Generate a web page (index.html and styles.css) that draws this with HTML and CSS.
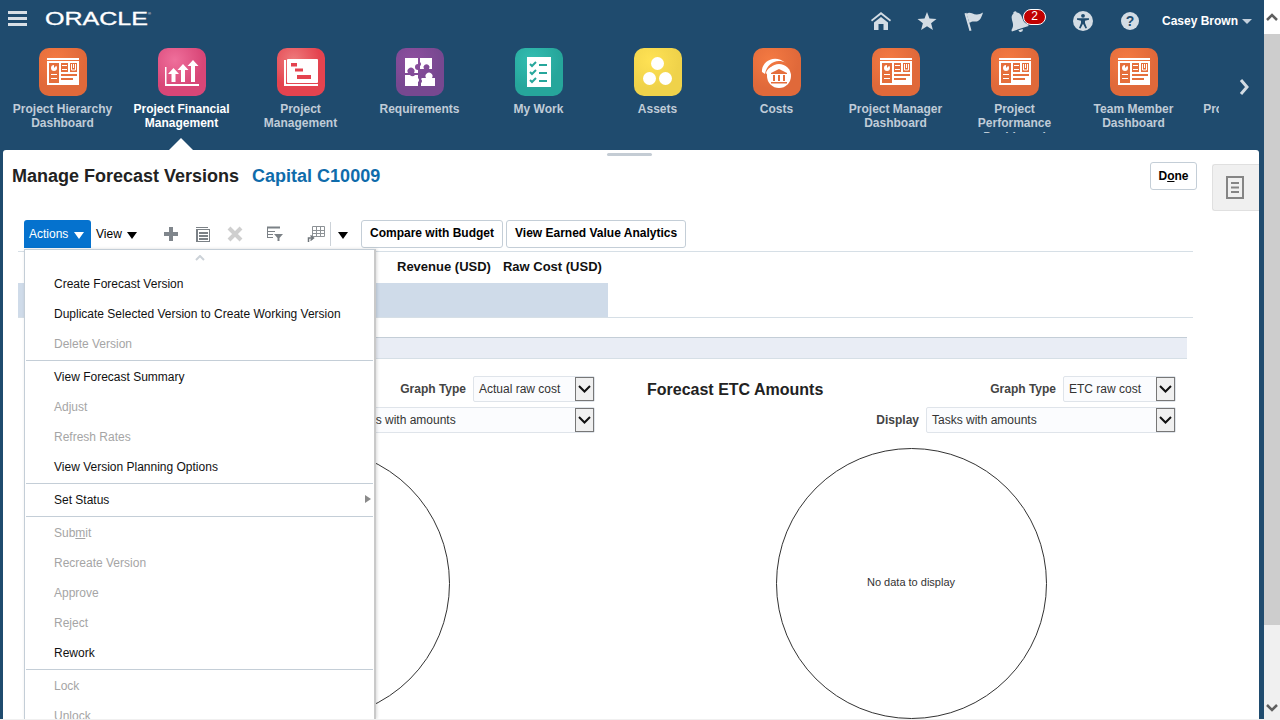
FILE: index.html
```html
<!DOCTYPE html>
<html lang="en">
<head>
    <meta charset="UTF-8">
    <title>Manage Forecast Versions</title>
    <link rel="stylesheet" href="styles.css">
</head>
<body>
    <svg class="defs" width="0" height="0">
        <symbol id="dash" viewBox="0 0 48 48">
            <rect x="8" y="10" width="32" height="2" fill="#fff"/>
            <rect x="8" y="13" width="32" height="24" fill="#fff"/>
            <rect x="10" y="15" width="10" height="20" fill="#e56f3c"/>
            <circle cx="15" cy="20" r="3" fill="#fff"/>
            <path d="M15 20V17h3z" fill="#e56f3c"/>
            <rect x="12" y="26" width="6" height="1" fill="#fff"/>
            <rect x="12" y="30" width="6" height="1" fill="#fff"/>
            <rect x="22" y="15" width="7" height="9" fill="#e56f3c"/>
            <rect x="23" y="17" width="5" height="1" fill="#fff"/>
            <rect x="23" y="21" width="5" height="1" fill="#fff"/>
            <rect x="31" y="15" width="7" height="9" fill="#e56f3c"/>
            <path d="M32.500 16v6h4v-6" fill="none" stroke="#fff"/>
            <rect x="34" y="16" width="1" height="4" fill="#fff"/>
            <rect x="22" y="26" width="16" height="2" fill="#e56f3c"/>
            <rect x="22" y="30" width="12" height="2" fill="#e56f3c"/>
        </symbol>
    </svg>

    <div class="app">
        <div class="main">
            <header class="topbar">
                <div class="hamburger"><span></span><span></span><span></span></div>
                <svg class="logo" width="110" height="20" viewBox="0 0 110 20">
                    <text x="0" y="17" font-family="Liberation Sans, sans-serif" font-size="18" fill="#fff" stroke="#fff" stroke-width="0.3" textLength="103" lengthAdjust="spacingAndGlyphs">ORACLE</text>
                    <text x="103" y="7" font-family="Liberation Sans, sans-serif" font-size="4" fill="#fff">®</text>
                </svg>
                <div class="top-icons">
                    <span class="top-icon">
                        <svg width="20" height="18" viewBox="0 0 20 18"><path d="M10 0 0 8l1 1.600L10 2.600l9 7L20 8z" fill="#d3dce4"/><path d="M3 10.400 10 5l7 5.400V18h-4.500v-6h-5v6H3z" fill="#d3dce4"/></svg>
                    </span>
                    <span class="top-icon">
                        <svg width="20" height="18" viewBox="0 0 20 18"><path d="m10 0 2.500 6.500 7 .4-5.400 4.400 1.800 6.700L10 14.200l-5.900 3.800 1.800-6.700L.5 6.900l7-.4z" fill="#d3dce4"/></svg>
                    </span>
                    <span class="top-icon">
                        <svg width="20" height="20" viewBox="0 0 20 20" fill="#d3dce4"><path d="M1.500 2.500l2-.8 5 17.800-2 .5z"/><path d="M3.500 3C7 0 10 4 14 3.500c2 0 4-1 6-2-1 3-2 7-5 8.500-3 1.500-5-1-8.500 2z"/></svg>
                    </span>
                    <span class="top-icon">
                        <svg class="bell" width="24" height="22" viewBox="0 0 24 22"><path d="M10 2.500a1.700 1.700 0 0 1 3.400 0C17 4 17 7.500 17 10.500c0 3.500 1.700 5.500 3.500 7V19H3v-1.500c1.700-1.500 3.500-3.500 3.500-7 0-3 0-6.500 3.500-8zM9.500 20h4.500a2.200 2.200 0 0 1-4.500 0z" fill="#d3dce4" transform="rotate(-18 12 11)"/></svg>
                        <span class="badge">2</span>
                    </span>
                    <span class="top-icon access">
                        <svg width="20" height="20" viewBox="0 0 20 20"><circle cx="10" cy="10" r="10" fill="#d3dce4"/><circle cx="10" cy="4.800" r="1.900" fill="#1f4b6e"/><path d="M4 7.200h12v1.500l-4 1v2.300l2 5-1.500.5-2.500-4.700-2.500 4.700L6 17l2-5V9.700l-4-1z" fill="#1f4b6e"/></svg>
                    </span>
                    <span class="top-icon">
                        <span class="help">?</span>
                    </span>
                </div>
                <span class="user">Casey Brown</span>
                <span class="user-caret"></span>
            </header>

            <nav class="nav">
                <div class="strip">
                    <a class="tile">
                        <span class="tile-icon orange"><svg width="48" height="48"><use href="#dash"/></svg></span>
                        <span class="tile-label">Project Hierarchy Dashboard</span>
                    </a>
                    <a class="tile active">
                        <span class="tile-icon pink">
                            <svg width="48" height="48" viewBox="0 0 48 48" fill="#fff">
                                <path d="M7 19h1.500v17H41v2H7z"/>
                                <path d="M15.500 20l5.500 6h-3.500v8h-4v-8H10z"/>
                                <path d="M25 16l5.500 6H27v12h-4V22h-3.500z"/>
                                <path d="M35 12l5.500 6H37v16h-4V18h-3.500z"/>
                            </svg>
                        </span>
                        <span class="tile-label">Project Financial Management</span>
                    </a>
                    <a class="tile">
                        <span class="tile-icon red">
                            <svg width="48" height="48" viewBox="0 0 48 48">
                                <path d="M7 12h2v24h32v2H7z" fill="#fff"/>
                                <rect x="10" y="11" width="31" height="24" rx="1" fill="#fff"/>
                                <rect x="14" y="15" width="6" height="3.500" fill="#e4434f"/>
                                <rect x="18" y="20.500" width="8" height="3" fill="#e4434f"/>
                                <rect x="20" y="27" width="14" height="4" fill="#e4434f"/>
                            </svg>
                        </span>
                        <span class="tile-label">Project Management</span>
                    </a>
                    <a class="tile">
                        <span class="tile-icon purple">
                            <svg width="48" height="48" viewBox="0 0 48 48" fill="#fff">
                                <path d="M9 10h13v6a3 3 0 0 0 0 6v3h-4a3.500 3.500 0 1 0-6 0H9z"/>
                                <path d="M24 10h12v11h-3a3 3 0 1 0-5 0h-4v-3a2.500 2.500 0 0 0 0-4z"/>
                                <path d="M9 27h5a3 3 0 0 0 5 0h3v3a2.500 2.500 0 0 1 0 4v4H9z"/>
                                <path d="M26 30h4a3.500 3.500 0 1 1 6 0h3v8H25v-3a2.500 2.500 0 0 0 0-4z"/>
                            </svg>
                        </span>
                        <span class="tile-label">Requirements</span>
                    </a>
                    <a class="tile">
                        <span class="tile-icon teal">
                            <svg width="48" height="48" viewBox="0 0 48 48">
                                <rect x="12" y="9" width="24" height="30" fill="#fff"/>
                                <g fill="none" stroke="#26a69b" stroke-width="2">
                                    <path d="M15 16l2 2 4-4"/><path d="M15 24l2 2 4-4"/><path d="M15 32l2 2 4-4"/>
                                    <path d="M24 17h8"/><path d="M24 25h8"/><path d="M24 33h8"/>
                                </g>
                            </svg>
                        </span>
                        <span class="tile-label">My Work</span>
                    </a>
                    <a class="tile">
                        <span class="tile-icon yellow">
                            <svg width="48" height="48" viewBox="0 0 48 48" fill="#fff">
                                <circle cx="23.500" cy="15.500" r="6.500"/>
                                <circle cx="15.500" cy="30.500" r="6.500"/>
                                <circle cx="31.500" cy="30.500" r="6.500"/>
                            </svg>
                        </span>
                        <span class="tile-label">Assets</span>
                    </a>
                    <a class="tile">
                        <span class="tile-icon orange">
                            <svg width="48" height="48" viewBox="0 0 48 48">
                                <path d="M9 24C8 14 21 5 33 15 24 10 14 15 12 26z" fill="#fff"/>
                                <path d="M13 25c1-6 10-9 16-7-7-1-12 3-14 10z" fill="#fff"/>
                                <circle cx="26" cy="28" r="12" fill="#fff"/>
                                <path d="M26 21l8 4v1H18v-1z" fill="#e56f3c"/>
                                <path d="M20 27h2v6h-2zM25 27h2v6h-2zM30 27h2v6h-2zM18 34h16v1.500H18z" fill="#e56f3c"/>
                            </svg>
                        </span>
                        <span class="tile-label">Costs</span>
                    </a>
                    <a class="tile">
                        <span class="tile-icon orange"><svg width="48" height="48"><use href="#dash"/></svg></span>
                        <span class="tile-label">Project Manager Dashboard</span>
                    </a>
                    <a class="tile">
                        <span class="tile-icon orange"><svg width="48" height="48"><use href="#dash"/></svg></span>
                        <span class="tile-label">Project Performance Dashboard</span>
                    </a>
                    <a class="tile">
                        <span class="tile-icon orange"><svg width="48" height="48"><use href="#dash"/></svg></span>
                        <span class="tile-label">Team Member Dashboard</span>
                    </a>
                    <a class="tile">
                        <span class="tile-icon orange"><svg width="48" height="48"><use href="#dash"/></svg></span>
                        <span class="tile-label">Project Resource</span>
                    </a>
                </div>
                <svg class="nav-next" width="12" height="16" viewBox="0 0 12 16"><path d="M2 1l6 7-6 7" fill="none" stroke="#d3dce4" stroke-width="3"/></svg>
            </nav>

            <section class="panel">
                <span class="grip"></span>
                <div class="content">
                    <div class="title-row">
                        <h1>Manage Forecast Versions</h1>
                        <span class="subject">Capital C10009</span>
                        <button class="btn done">D<u>o</u>ne</button>
                    </div>

                    <div class="toolbar">
                        <span class="actions">Actions <i class="caret white"></i></span>
                        <span class="view">View <i class="caret"></i></span>
                        <span class="tool">
                            <svg width="16" height="16" viewBox="0 0 16 16"><path d="M6 1h4v5h5v4h-5v5H6v-5H1V6h5z" fill="#80868c"/></svg>
                        </span>
                        <span class="tool">
                            <svg width="16" height="16" viewBox="0 0 16 16" fill="#7b8186"><rect x="1" y="1" width="12" height="1"/><rect x="1" y="3" width="14" height="13"/><rect x="3" y="4" width="11" height="11" fill="#fff"/><rect x="4" y="6" width="9" height="2"/><rect x="4" y="9" width="9" height="2"/><rect x="4" y="12" width="9" height="2"/></svg>
                        </span>
                        <span class="tool">
                            <svg width="16" height="16" viewBox="0 0 16 16"><path d="M2 2l12 12M14 2 2 14" stroke="#cfcfcf" stroke-width="4"/></svg>
                        </span>
                        <span class="tool gap">
                            <svg width="18" height="16" viewBox="0 0 18 16" fill="none" stroke="#7b8186"><path d="M1 1.500h13" stroke-width="2"/><path d="M1.500 2v10M1 5.500h8M1 8.500h6M1 11.500h6"/><path d="M8 8h9l-3.500 4v3h-2v-3z" fill="#7b8186" stroke="none"/></svg>
                        </span>
                        <span class="tool freeze">
                            <svg width="18" height="18" viewBox="0 0 18 18" fill="none" stroke="#8d9296"><path d="M5.500 1.500h12v10h-12zM5.500 5.500h12M5.500 8.500h12M9.500 1.500v10M13.500 1.500v10"/><path d="M1.500 17v-4h4M3.500 10.500l3 2.500-3 2.500" stroke="#6f757a" stroke-width="1.500"/></svg>
                        </span>
                        <span class="tool-sep"></span>
                        <i class="caret more"></i>
                        <button class="btn">Compare with Budget</button>
                        <button class="btn">View Earned Value Analytics</button>
                    </div>

                    <div class="table">
                        <div class="table-head">
                            <span>Revenue (USD)</span>
                            <span>Raw Cost (USD)</span>
                        </div>
                        <div class="table-row"></div>
                    </div>

                    <div class="band"></div>

                    <div class="charts">
                        <div class="chart">
                            <div class="chart-row">
                                <label>Graph Type</label>
                                <span class="select graph-left">Actual raw cost<span class="select-btn"><svg width="13" height="8" viewBox="0 0 13 8"><path d="M1 1l5.500 5.500L12 1" fill="none" stroke="#111" stroke-width="2"/></svg></span></span>
                            </div>
                            <div class="chart-row">
                                <span class="select wide">Tasks with amounts<span class="select-btn"><svg width="13" height="8" viewBox="0 0 13 8"><path d="M1 1l5.500 5.500L12 1" fill="none" stroke="#111" stroke-width="2"/></svg></span></span>
                            </div>
                            <div class="donut-wrap"><div class="donut"></div></div>
                        </div>
                        <div class="chart">
                            <div class="chart-row">
                                <h2>Forecast ETC Amounts</h2>
                                <label>Graph Type</label>
                                <span class="select graph-right">ETC raw cost<span class="select-btn"><svg width="13" height="8" viewBox="0 0 13 8"><path d="M1 1l5.500 5.500L12 1" fill="none" stroke="#111" stroke-width="2"/></svg></span></span>
                            </div>
                            <div class="chart-row">
                                <label>Display</label>
                                <span class="select wide">Tasks with amounts<span class="select-btn"><svg width="13" height="8" viewBox="0 0 13 8"><path d="M1 1l5.500 5.500L12 1" fill="none" stroke="#111" stroke-width="2"/></svg></span></span>
                            </div>
                            <div class="donut-wrap"><div class="donut">No data to display</div></div>
                        </div>
                    </div>
                </div>
                <aside class="side-tab">
                    <svg width="18" height="23" viewBox="0 0 18 23" fill="none" stroke="#858585" stroke-width="2"><path d="M1 1h16v21H1z"/><path d="M5 7h8M5 11.500h8M5 16h8"/></svg>
                </aside>
            </section>

            <div class="menu">
                <div class="menu-up"><svg width="10" height="6" viewBox="0 0 10 6"><path d="M1 5l4-4 4 4" fill="none" stroke="#ccd2d8" stroke-width="2"/></svg></div>
                <div class="menu-group">
                    <div class="menu-item">Create Forecast Version</div>
                    <div class="menu-item">Duplicate Selected Version to Create Working Version</div>
                    <div class="menu-item off">Delete Version</div>
                </div>
                <div class="menu-group">
                    <div class="menu-item">View Forecast Summary</div>
                    <div class="menu-item off">Adjust</div>
                    <div class="menu-item off">Refresh Rates</div>
                    <div class="menu-item">View Version Planning Options</div>
                </div>
                <div class="menu-group">
                    <div class="menu-item has-sub">Set Status</div>
                </div>
                <div class="menu-group">
                    <div class="menu-item off">Sub<u>m</u>it</div>
                    <div class="menu-item off">Recreate Version</div>
                    <div class="menu-item off">Approve</div>
                    <div class="menu-item off">Reject</div>
                    <div class="menu-item">Rework</div>
                </div>
                <div class="menu-group">
                    <div class="menu-item off">Lock</div>
                    <div class="menu-item off">Unlock</div>
                </div>
            </div>
        </div>

        <div class="scrollbar">
            <div class="scroll-arrow"><svg width="12" height="8" viewBox="0 0 12 8"><path d="M1 7l5-5 5 5" fill="none" stroke="#5f5f5f" stroke-width="2.500"/></svg></div>
            <div class="scroll-thumb"></div>
            <div class="scroll-arrow down"><svg width="12" height="8" viewBox="0 0 12 8"><path d="M1 1l5 5 5-5" fill="none" stroke="#5f5f5f" stroke-width="2.500"/></svg></div>
        </div>
    </div>
</body>
</html>
```

FILE: styles.css
```css
* {
    box-sizing: border-box;
}
html, body {
    margin: 0;
    height: 100%;
    overflow: hidden;
}
body {
    font-family: "Liberation Sans", Arial, sans-serif;
    font-size: 12px;
    color: #000;
    background-color: #f0f0f0;
}
.defs {
    position: absolute;
}
.app {
    display: flex;
    height: 719px;
}
.main {
    position: relative;
    width: 1264px;
    display: flex;
    flex-direction: column;
    background-color: #1f4b6e;
    overflow: hidden;
}

/* top bar */
.topbar {
    display: flex;
    align-items: center;
    height: 40px;
    padding: 0 12px 0 8px;
    flex: none;
}
.hamburger {
    display: flex;
    flex-direction: column;
    gap: 3px;
    width: 19px;
    margin-bottom: 4px;
}
.hamburger span {
    height: 3px;
    background-color: #d8dfe6;
}
.logo {
    margin: 0 0 4px 18px;
}
.top-icons {
    display: flex;
    align-items: center;
    margin: 2px 0 0 auto;
}
.top-icon {
    position: relative;
    display: flex;
    justify-content: center;
    align-items: center;
    width: 46px;
    height: 22px;
}
.bell {
    margin-left: -2px;
}
.access {
    margin-left: 18px;
    margin-right: 1px;
}
.badge {
    position: absolute;
    left: 27px;
    top: -1px;
    width: 23px;
    height: 16px;
    border: 1.5px solid #fff;
    border-radius: 8px;
    background-color: #c00000;
    color: #fff;
    font-size: 12px;
    line-height: 13px;
    text-align: center;
}
.help {
    width: 18px;
    height: 18px;
    border-radius: 50%;
    background-color: #d3dce4;
    color: #1f4b6e;
    font-size: 14px;
    font-weight: bold;
    line-height: 18px;
    text-align: center;
}
.user {
    margin: 2px 0 0 9px;
    color: #fff;
    font-weight: bold;
}
.user-caret {
    margin: 2px 0 0 4px;
    border-left: 5px solid transparent;
    border-right: 5px solid transparent;
    border-top: 5px solid #c4d0dc;
}

/* springboard */
.nav {
    display: flex;
    align-items: center;
    height: 110px;
    flex: none;
}
.strip {
    display: flex;
    width: 1219px;
    height: 110px;
    padding: 8px 0 0 3px;
    overflow: hidden;
    flex: none;
}
.tile {
    position: relative;
    display: flex;
    flex-direction: column;
    align-items: center;
    width: 119px;
    flex: none;
}
.tile.active::after {
    content: "";
    position: absolute;
    bottom: 0;
    left: 47px;
    border-left: 12px solid transparent;
    border-right: 12px solid transparent;
    border-bottom: 12px solid #fff;
}
.tile-icon {
    width: 48px;
    height: 48px;
    border-radius: 10px;
    flex: none;
}
.tile-icon svg {
    display: block;
}
.orange { background: radial-gradient(circle at 35% 25%, #f47a42 0, #e0693a 60%); }
.pink { background: radial-gradient(circle at 35% 25%, #ef6f9b 0, #d84677 60%); }
.red { background: radial-gradient(circle at 35% 25%, #ee7b7c 0, #e4434f 55%); }
.purple { background: radial-gradient(circle at 35% 25%, #8e4f9f 0, #774890 60%); }
.teal { background: radial-gradient(circle at 35% 25%, #33bdb1 0, #26a69b 60%); }
.yellow { background: radial-gradient(circle at 35% 25%, #ffe254 0, #efd24a 60%); }
.tile-label {
    width: 106px;
    max-height: 31px;
    margin-top: 6px;
    overflow: hidden;
    color: #c0ccd8;
    font-weight: bold;
    line-height: 14px;
    text-align: center;
}
.active .tile-label {
    color: #fff;
}
.nav-next {
    margin: -16px 0 0 20px;
}

/* main panel */
.panel {
    position: relative;
    display: flex;
    flex: 1;
    min-height: 0;
    margin: 0 5px 0 3px;
    background-color: #fff;
    border-radius: 3px 3px 0 0;
    overflow: hidden;
}
.grip {
    position: absolute;
    top: 3px;
    left: 604px;
    width: 45px;
    height: 3px;
    border-radius: 2px;
    background-color: #c4ccd4;
}
.content {
    width: 1194px;
    padding-left: 9px;
    flex: none;
}
.title-row {
    display: flex;
    align-items: center;
    height: 28px;
    margin-top: 12px;
}
h1 {
    margin: 0;
    font-size: 18px;
    color: #222;
}
.subject {
    margin-left: 13px;
    font-size: 18px;
    font-weight: bold;
    color: #0f6cab;
}
.btn {
    height: 28px;
    padding: 0 8px 2px;
    border: 1px solid #c4ced7;
    border-radius: 3px;
    background-color: #fff;
    color: #000;
    font-family: inherit;
    font-size: 12px;
    font-weight: bold;
}
.done {
    margin-left: auto;
    width: 47px;
    padding: 0;
}

/* toolbar */
.toolbar {
    display: flex;
    align-items: center;
    gap: 0;
    height: 28px;
    margin: 30px 0 0 12px;
}
.actions {
    width: 67px;
    height: 28px;
    padding-left: 5px;
    border-radius: 3px 3px 0 0;
    background-color: #0572ce;
    color: #fff;
    line-height: 28px;
}
.view {
    width: 64px;
    padding-left: 5px;
}
.caret {
    display: inline-block;
    margin-left: 2px;
    vertical-align: -1px;
    border-left: 5px solid transparent;
    border-right: 5px solid transparent;
    border-top: 7px solid #000;
}
.caret.white {
    border-top-color: #fff;
}
.caret.more {
    margin: 2px 13px 0 7px;
}
.tool {
    display: flex;
    justify-content: center;
    width: 32px;
}
.tool.gap {
    margin-left: 8px;
}
.tool.freeze {
    margin-left: 9px;
    width: 32px;
}
.tool-sep {
    width: 1px;
    height: 24px;
    margin-left: -2px;
    background-color: #ccd2d8;
}
.toolbar .btn + .btn {
    margin-left: 3px;
}

/* table */
.table {
    width: 1175px;
    margin: 3px 0 0 6px;
    border-top: 1px solid #d6dfe6;
    border-bottom: 1px solid #d6dfe6;
}
.table-head {
    display: flex;
    gap: 12px;
    height: 31px;
    padding: 7px 0 0 379px;
    font-size: 13px;
    font-weight: bold;
    line-height: 16px;
    color: #111;
}
.table-row {
    width: 590px;
    height: 34px;
    background-color: #cfdbe9;
}
.band {
    width: 1160px;
    height: 22px;
    margin: 19px 0 0 15px;
    border-top: 1px solid #c4ced7;
    border-bottom: 1px solid #d6dfe6;
    background-color: #e9edf5;
}

/* charts */
.charts {
    display: grid;
    grid-template-columns: 560px 528px;
    gap: 53px;
    margin: 17px 0 0 22px;
}
.chart-row {
    display: flex;
    justify-content: flex-end;
    align-items: center;
    height: 26px;
    margin: 0 -1px 5px 0;
}
.chart-row label {
    margin-right: 7px;
    font-weight: bold;
    color: #444;
}
.chart h2 {
    margin: 1px auto 0 0;
    font-size: 16px;
    color: #222;
}
.select {
    position: relative;
    display: block;
    height: 26px;
    padding-left: 5px;
    border: 1px solid #dfe4ea;
    border-radius: 2px;
    background-color: #fbfcfe;
    color: #333;
    line-height: 24px;
}
.graph-left { width: 122px; }
.graph-right { width: 113px; }
.wide { width: 250px; }
.select-btn {
    position: absolute;
    top: 0;
    right: 0;
    display: flex;
    justify-content: center;
    align-items: center;
    width: 19px;
    height: 24px;
    border: 1px solid #777;
    background-color: #f0f0f0;
}
.donut-wrap {
    display: flex;
    justify-content: center;
    margin-top: 15px;
}
.donut {
    display: flex;
    justify-content: center;
    align-items: center;
    width: 271px;
    height: 271px;
    padding-bottom: 3px;
    border: 1px solid #333;
    border-radius: 50%;
    font-size: 11px;
    color: #333;
}

/* right side tab */
.side-tab {
    display: flex;
    justify-content: center;
    align-items: center;
    width: 47px;
    height: 47px;
    margin: 14px 0 0 15px;
    padding-right: 2px;
    border: 1px solid #e0e0e0;
    border-right: none;
    border-radius: 3px 0 0 3px;
    background-color: #f0f0f0;
    flex: none;
}

/* actions menu, lies over the page */
.menu {
    position: absolute;
    top: 249px;
    bottom: 0;
    left: 24px;
    width: 352px;
    border: 1px solid #c4ced7;
    border-right: 2px solid #c9c9c9;
    border-bottom: none;
    background-color: #fff;
    box-shadow: 1px 0 3px rgba(0, 0, 0, 0.15);
    overflow: hidden;
}
.menu-up {
    display: flex;
    justify-content: center;
    height: 18px;
    padding-top: 5px;
}
.menu-group {
    margin: 0 1px;
    padding-bottom: 2px;
    border-bottom: 1px solid #c4ced7;
}
.menu-group:last-child {
    border-bottom: none;
}
.menu-item {
    position: relative;
    height: 30px;
    padding: 1px 0 0 28px;
    line-height: 30px;
    color: #111;
}
.menu-item.off {
    color: #a5a5a5;
}
.has-sub::after {
    content: "";
    position: absolute;
    top: 11px;
    right: 2px;
    border-top: 4px solid transparent;
    border-bottom: 4px solid transparent;
    border-left: 6px solid #8a8a8a;
}

/* page scrollbar */
.scrollbar {
    display: flex;
    flex-direction: column;
    width: 16px;
    background-color: #f0f0f0;
}
.scroll-arrow {
    display: flex;
    justify-content: center;
    align-items: center;
    height: 34px;
    background-color: #fff;
}
.scroll-arrow.down {
    height: 22px;
    margin-top: auto;
    background-color: #f0f0f0;
}
.scroll-thumb {
    height: 591px;
    background-color: #cdcdcd;
}
```
